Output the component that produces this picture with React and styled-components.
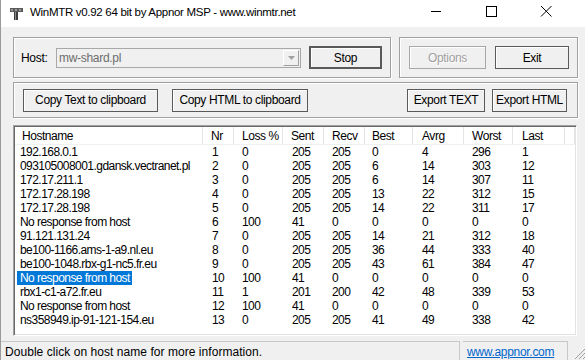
import React from "react"
import styled, {createGlobalStyle, css} from "styled-components"

const GlobalStyle = createGlobalStyle`
  html, body {
    margin: 0;
    padding: 0;
    width: 585px;
    height: 360px;
    overflow: hidden;
    background: #f0f0f0;
  }
`;

const Window = styled.div`
  width: 592px;
  height: 360px;
  display: flex;
  flex-direction: column;
  background: #f0f0f0;
  border-left: 1px solid #9a9a9a;
  box-sizing: border-box;
  font-family: "Liberation Sans", Arial, sans-serif;
  font-size: 11px;
  color: #000;
`;

const TitleBar = styled.div`
  height: 27px;
  background: #fff;
  display: flex;
  align-items: center;
  padding-left: 9px;
`;

const TitleText = styled.span`
  margin-left: 7px;
  font-size: 11.5px;
  letter-spacing: -0.3px;
  color: #000;
  flex: 1;
  margin-top: -4px;
`;

const CaptionButton = styled.div`
  width: 55px;
  height: 27px;
  display: flex;
  align-items: center;
  justify-content: center;
  margin-top: -6px;
`;

const Client = styled.div`
  flex: 1;
  display: flex;
  flex-direction: column;
  padding: 10px 0 0 12px;
`;

const Row = styled.div`
  display: flex;
  gap: 8px;
`;

const Group = styled.div`
  box-sizing: border-box;
  height: ${({h}) => h}px;
  width: ${({w}) => w}px;
  border: 1px solid #a0a0a0;
  box-shadow: inset 1px 1px 0 #fff, 1px 1px 0 #fff;
  display: flex;
  align-items: center;
  padding-left: ${({pl}) => pl || 9}px;
  gap: ${({gap}) => gap || 0}px;
  margin-top: ${({mt}) => mt || 0}px;
`;

const Label = styled.span`
  width: 35px;
  margin-left: -2px;
  font-size: 12px;
  letter-spacing: -0.3px;
  margin-top: 1px;
`;

const Combo = styled.div`
  box-sizing: border-box;
  width: 245px;
  height: 20px;
  border: 1px solid #a8a8a8;
  background: #f0f0f0;
  display: flex;
  align-items: center;
  justify-content: space-between;
  padding: 0 1px 0 2px;
  color: #6d6d6d;
  font-size: 12px;
  letter-spacing: -0.3px;
`;

const DropButton = styled.div`
  box-sizing: border-box;
  width: 16px;
  height: 16px;
  border: 1px solid;
  border-color: #fff #a0a0a0 #a0a0a0 #fff;
  background: #f0f0f0;
  display: flex;
  align-items: center;
  justify-content: center;
`;

const Button = styled.div`
  box-sizing: border-box;
  width: ${({w}) => w}px;
  height: ${({h}) => h || 23}px;
  border: 1px solid #5a5a5a;
  box-shadow: inset 1px 1px 0 #fff;
  background: #f0f0f0;
  display: flex;
  align-items: center;
  justify-content: center;
  font-size: 12px;
  letter-spacing: -0.35px;
  margin-left: ${({ml}) => ml || 0}px;
  white-space: nowrap;
  ${({isDefault}) => isDefault && css`
    border: 2px solid #5a5a5a;
  `}
  ${({disabled}) => disabled && css`
    border-color: #a8a8a8;
    color: #a0a0a0;
    text-shadow: 1px 1px 0 #fff;
  `}
`;

const Spacer = styled.div`
  flex: 1;
`;

const ListFrame = styled.div`
  box-sizing: border-box;
  margin-top: 7px;
  width: 564px;
  height: 211px;
  border: 1px solid;
  border-color: #a0a0a0 #fff #fff #a0a0a0;
  box-shadow: inset 1px 1px 0 #696969, inset -1px -1px 0 #e3e3e3;
  background: #fff;
  padding: 1px;
  overflow: hidden;
`;

const HeaderRow = styled.div`
  display: flex;
  height: 17px;
  border-bottom: 1px solid #f0f0f0;
`;

const HeaderCell = styled.div`
  box-sizing: border-box;
  width: ${({w}) => w}px;
  flex: ${({fill}) => fill ? 1 : "none"};
  border-right: 1px solid #e5e5e5;
  display: flex;
  align-items: center;
  padding-left: ${({pl}) => pl}px;
  padding-top: 1px;
  font-size: 12px;
  letter-spacing: -0.45px;
  white-space: nowrap;
`;

const DataRow = styled.div`
  display: flex;
  height: 14px;
  align-items: center;
`;

const Cell = styled.div`
  box-sizing: border-box;
  width: ${({w}) => w}px;
  padding-left: ${({pl}) => pl}px;
  font-size: 12px;
  letter-spacing: -0.55px;
  white-space: nowrap;
  overflow: hidden;
`;

const Selected = styled.span`
  background: ${({on}) => on ? "#0078d7" : "transparent"};
  color: ${({on}) => on ? "#fff" : "#000"};
  padding: 0 2px 1px 3px;
  margin-left: -3px;
`;

const StatusBar = styled.div`
  height: 20px;
  display: flex;
  align-items: flex-end;
  margin-top: 4px;
  margin-left: -12px;
`;

const StatusPanel = styled.div`
  box-sizing: border-box;
  width: ${({w}) => w}px;
  height: 19px;
  border-top: 1px solid #c8c8c8;
  border-right: 1px solid #c8c8c8;
  display: flex;
  align-items: center;
  padding-left: ${({pl}) => pl}px;
  padding-top: 2px;
  margin-right: ${({mr}) => mr || 0}px;
  font-size: 12px;
  letter-spacing: 0.05px;
`;

const Link = styled.span`
  color: #0066cc;
  text-decoration: underline;
  letter-spacing: -0.3px;
`;

const Grip = styled.div`
  width: 14px;
  height: 14px;
  margin-left: 4px;
`;

const columns = [
  {name: "Hostname", w: 188, hp: 7, dp: 5},
  {name: "Nr", w: 31, hp: 8, dp: 9},
  {name: "Loss %", w: 49, hp: 8, dp: 8},
  {name: "Sent", w: 41, hp: 8, dp: 9},
  {name: "Recv", w: 41, hp: 8, dp: 8},
  {name: "Best", w: 48, hp: 7, dp: 7},
  {name: "Avrg", w: 51, hp: 9, dp: 9},
  {name: "Worst", w: 49, hp: 8, dp: 8},
  {name: "Last", w: 52, hp: 9, dp: 9},
];

const rows = [
  ["192.168.0.1", 1, 0, 205, 205, 0, 4, 296, 1],
  ["093105008001.gdansk.vectranet.pl", 2, 0, 205, 205, 6, 14, 303, 12],
  ["172.17.211.1", 3, 0, 205, 205, 6, 14, 307, 11],
  ["172.17.28.198", 4, 0, 205, 205, 13, 22, 312, 15],
  ["172.17.28.198", 5, 0, 205, 205, 14, 22, 311, 17],
  ["No response from host", 6, 100, 41, 0, 0, 0, 0, 0],
  ["91.121.131.24", 7, 0, 205, 205, 14, 21, 312, 18],
  ["be100-1166.ams-1-a9.nl.eu", 8, 0, 205, 205, 36, 44, 333, 40],
  ["be100-1048.rbx-g1-nc5.fr.eu", 9, 0, 205, 205, 43, 61, 384, 47],
  ["No response from host", 10, 100, 41, 0, 0, 0, 0, 0],
  ["rbx1-c1-a72.fr.eu", 11, 1, 201, 200, 42, 48, 339, 53],
  ["No response from host", 12, 100, 41, 0, 0, 0, 0, 0],
  ["ns358949.ip-91-121-154.eu", 13, 0, 205, 205, 41, 49, 338, 42],
];

function AppIcon() {
  return (
    <svg width="13" height="12" viewBox="0 0 13 12">
      <rect x="0" y="0" width="13" height="4" fill="#5a5a5a"/>
      <rect x="1" y="1" width="2" height="2" fill="#9a9a9a"/>
      <rect x="5" y="1" width="2" height="2" fill="#9a9a9a"/>
      <rect x="9" y="1" width="2" height="2" fill="#9a9a9a"/>
      <rect x="4" y="4" width="4" height="8" fill="#3c3c3c"/>
      <rect x="5" y="4" width="1" height="8" fill="#8a8a8a"/>
    </svg>
  );
}

export default function App() {
  return (
    <>
      <GlobalStyle/>
      <Window>
        <TitleBar>
          <AppIcon/>
          <TitleText>WinMTR v0.92 64 bit by Appnor MSP - www.winmtr.net</TitleText>
          <CaptionButton>
            <svg width="12" height="12" viewBox="0 0 12 12"><path d="M1 6.5h10" stroke="#000" strokeWidth="1"/></svg>
          </CaptionButton>
          <CaptionButton>
            <svg width="12" height="12" viewBox="0 0 12 12"><rect x="1.5" y="1.5" width="10" height="10" fill="none" stroke="#000" strokeWidth="1"/></svg>
          </CaptionButton>
          <CaptionButton>
            <svg width="12" height="12" viewBox="0 0 12 12"><path d="M1 1L11.5 11.5M11.5 1L1 11.5" stroke="#000" strokeWidth="1"/></svg>
          </CaptionButton>
          <Spacer style={{flex: "none", width: 19}}/>
        </TitleBar>
        <Client>
          <Row>
            <Group w={378} h={41}>
              <Label>Host:</Label>
              <Combo>
                <span>mw-shard.pl</span>
                <DropButton>
                  <svg width="7" height="4" viewBox="0 0 7 4"><path d="M0 0h7L3.5 4z" fill="#a0a0a0"/></svg>
                </DropButton>
              </Combo>
              <Button w={73} h={23} isDefault ml={8}>Stop</Button>
            </Group>
            <Group w={179} h={41} gap={9}>
              <Button w={77} disabled>Options</Button>
              <Button w={74}>Exit</Button>
            </Group>
          </Row>
          <Group w={565} h={36} mt={4}>
            <Button w={135} h={23}>Copy Text to clipboard</Button>
            <Button w={136} h={23} ml={14}>Copy HTML to clipboard</Button>
            <Spacer/>
            <Button w={78} h={23}>Export TEXT</Button>
            <Button w={75} h={23} ml={7}>Export HTML</Button>
            <Spacer style={{flex: "none", width: 10}}/>
          </Group>
          <ListFrame>
            <HeaderRow>
              {columns.map(c => (
                <HeaderCell key={c.name} w={c.w} pl={c.hp}>{c.name}</HeaderCell>
              ))}
              <HeaderCell fill pl={0}/>
            </HeaderRow>
            {rows.map((r, i) => (
              <DataRow key={i}>
                {r.map((v, j) => (
                  <Cell key={j} w={columns[j].w} pl={columns[j].dp}>
                    {j === 0 ? <Selected on={i === 9}>{v}</Selected> : v}
                  </Cell>
                ))}
              </DataRow>
            ))}
          </ListFrame>
          <StatusBar>
            <StatusPanel w={459} pl={4} mr={3}>Double click on host name for more information.</StatusPanel>
            <StatusPanel w={105} pl={4}><Link>www.appnor.com</Link></StatusPanel>
            <Grip>
              <svg width="14" height="14" viewBox="0 0 14 14">
                <path d="M13 3L3 13M13 7L7 13M13 11L11 13" stroke="#a0a0a0" strokeWidth="1"/>
              </svg>
            </Grip>
          </StatusBar>
        </Client>
      </Window>
    </>
  );
}
